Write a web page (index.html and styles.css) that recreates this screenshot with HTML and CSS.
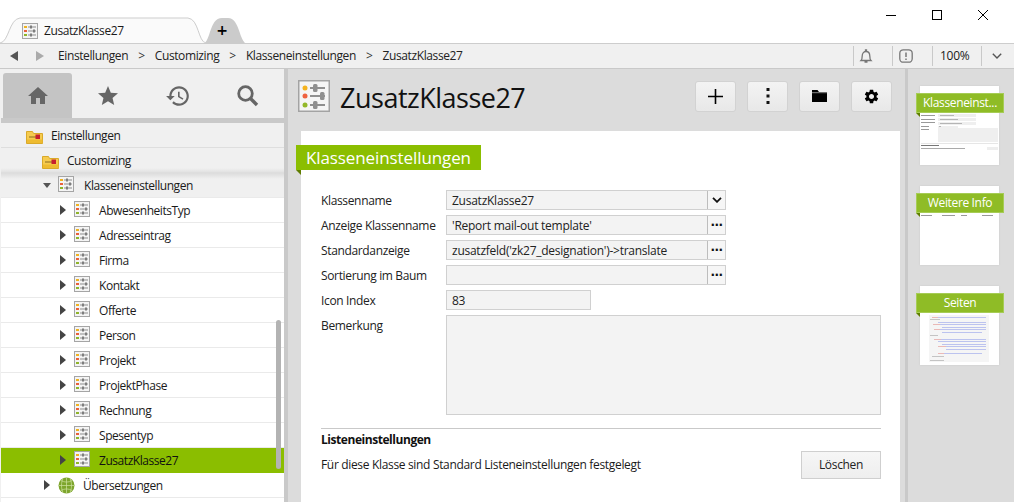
FILE: index.html
```html
<!DOCTYPE html>
<html lang="de">
<head>
<meta charset="utf-8">
<title>ZusatzKlasse27</title>
<link rel="stylesheet" href="styles.css">
</head>
<body>
<svg class="defs" width="0" height="0">
  <symbol id="cls" viewBox="0 0 32 32">
    <rect x=".75" y=".75" width="30.500" height="30.500" fill="#f5f5f5" stroke="#a3a3a3" stroke-width="1.500"/>
    <circle cx="7" cy="8" r="2.500" fill="#f5b31e"/>
    <circle cx="7" cy="16" r="2.500" fill="#ef6240"/>
    <circle cx="7" cy="25" r="2.500" fill="#93b82a"/>
    <path d="M12 8h15M12 16h15M12 25h15" stroke="#8f8f8f" stroke-width="2"/>
    <rect x="15" y="4" width="4.500" height="8" rx="1.500" fill="#8f8f8f"/>
    <rect x="22" y="12" width="4.500" height="8" rx="1.500" fill="#8f8f8f"/>
    <rect x="15" y="21" width="4.500" height="8" rx="1.500" fill="#8f8f8f"/>
  </symbol>
  <symbol id="cls-sm" viewBox="0 0 16 16">
    <rect x=".5" y=".5" width="15" height="15" fill="#f4f4f4" stroke="#a5a5a5"/>
    <rect x="2" y="3" width="3" height="2" fill="#efb21f"/>
    <rect x="2" y="7" width="3" height="2" fill="#e8603c"/>
    <rect x="2" y="11" width="3" height="2" fill="#8fb52a"/>
    <path d="M6 4h8M6 8h8M6 12h8" stroke="#8d8d8d"/>
    <rect x="8" y="2.500" width="2" height="3" fill="#7d7d7d"/>
    <rect x="11" y="6.500" width="2" height="3" fill="#7d7d7d"/>
    <rect x="8" y="10.500" width="2" height="3" fill="#7d7d7d"/>
  </symbol>
  <symbol id="folder" viewBox="0 0 17 14">
    <path d="M.5 13.500V1.500h6l1 2h9v10z" fill="#f6cb4e" stroke="#d9a92a"/>
    <path d="M1 9.500h15.500v3.500H1z" fill="#eebb30"/>
    <path d="M3 7h7" stroke="#8a6a20"/>
    <rect x="9.500" y="4.500" width="4.500" height="4.500" fill="#c71f2d"/>
  </symbol>
  <symbol id="arrow" viewBox="0 0 6 10"><path d="M0 0l6 5-6 5z" fill="#444"/></symbol>
</svg>

<header class="tabstrip">
  <div class="tab">
    <svg class="tab-shape" width="206" height="27" viewBox="0 0 206 27"><path d="M0 26c9-1 9-24 20-25h168c11 1 10 24 18 25" fill="#fafafa" stroke="#cdcdcd"/></svg>
    <svg class="ic16"><use href="#cls-sm"/></svg>
    <span class="tab-title">ZusatzKlasse27</span>
  </div>
  <div class="newtab">
    <svg class="newtab-shape" width="44" height="27" viewBox="0 0 44 27"><path d="M0 27c8-2 6-26 19-26h6c12 0 11 24 19 26z" fill="#cbcbcb"/></svg>
    <span class="newtab-plus">+</span>
  </div>
  <div class="winctl">
    <svg width="12" height="12" viewBox="0 0 12 12"><path d="M1 6.500h10" stroke="#000"/></svg>
    <svg width="12" height="12" viewBox="0 0 12 12"><rect x="1.500" y="1.500" width="9" height="9" fill="none" stroke="#000"/></svg>
    <svg width="12" height="12" viewBox="0 0 12 12"><path d="M1 1l10 10M11 1L1 11" stroke="#000"/></svg>
  </div>
</header>

<nav class="crumbbar">
  <svg class="nav-arrow" width="10" height="10" viewBox="0 0 10 10"><path d="M9 0L1 5l8 5z" fill="#555"/></svg>
  <svg class="nav-arrow nav-next" width="10" height="10" viewBox="0 0 10 10"><path d="M1 0l8 5-8 5z" fill="#aaa"/></svg>
  <span class="crumb">Einstellungen</span><span class="sep">&gt;</span>
  <span class="crumb">Customizing</span><span class="sep">&gt;</span>
  <span class="crumb">Klasseneinstellungen</span><span class="sep">&gt;</span>
  <span class="crumb">ZusatzKlasse27</span>
  <div class="crumb-tools">
    <span class="tool tool-bell"><svg width="14" height="15" viewBox="0 0 14 15"><path d="M2 11.500c1-1 1.200-2 1.200-4.500C3.200 4 5 2.500 7 2.500S10.800 4 10.800 7c0 2.500.2 3.500 1.200 4.500zM6.500 1h1v1.500h-1zM5.500 13h3" fill="none" stroke="#777" stroke-width="1.300"/></svg></span>
    <span class="tool tool-info"><svg width="14" height="14" viewBox="0 0 14 14"><rect x=".8" y=".8" width="12.400" height="12.400" rx="3.500" fill="none" stroke="#777" stroke-width="1.300"/><path d="M7 3.500v4.500M7 9.500v1.500" stroke="#666" stroke-width="1.300"/></svg></span>
    <span class="tool tool-zoom">100%</span>
    <span class="tool tool-down"><svg width="10" height="6" viewBox="0 0 10 6"><path d="M.8.8L5 5l4.200-4.200" fill="none" stroke="#555" stroke-width="1.400"/></svg></span>
  </div>
</nav>

<div class="workspace">
  <aside class="sidebar">
    <div class="side-tabs">
      <span class="side-tab is-active"><svg width="24" height="24" viewBox="0 0 24 24"><path d="M10 20v-6h4v6h5v-8h3L12 3 2 12h3v8z" fill="#666"/></svg></span>
      <span class="side-tab"><svg width="24" height="24" viewBox="0 0 24 24"><path d="M12 17.270L18.180 21l-1.640-7.030L22 9.240l-7.190-.61L12 2 9.190 8.630 2 9.240l5.460 4.730L5.820 21z" fill="#666"/></svg></span>
      <span class="side-tab"><svg width="26" height="26" viewBox="0 0 24 24"><path d="M13 3c-4.970 0-9 4.030-9 9H1l3.890 3.890.07.14L9 12H6c0-3.870 3.130-7 7-7s7 3.130 7 7-3.130 7-7 7c-1.930 0-3.680-.79-4.940-2.060l-1.420 1.420C8.270 19.990 10.510 21 13 21c4.970 0 9-4.030 9-9s-4.030-9-9-9zm-1 5v5l4.280 2.540.72-1.210-3.500-2.080V8H12z" fill="#666"/></svg></span>
      <span class="side-tab"><svg width="24" height="24" viewBox="0 0 24 24"><circle cx="9.500" cy="9.500" r="6.800" fill="none" stroke="#666" stroke-width="2.800"/><path d="M14.500 14.500l6.500 6.500" stroke="#666" stroke-width="3.400"/></svg></span>
    </div>
    <div class="tree">
      <div class="row row-top lvl0"><svg class="ic-folder"><use href="#folder"/></svg><span>Einstellungen</span></div>
      <div class="row row-top row-shade lvl1"><svg class="ic-folder"><use href="#folder"/></svg><span>Customizing</span></div>
      <div class="row row-open lvl2"><svg class="ic-down" width="8" height="5" viewBox="0 0 8 5"><path d="M0 0h8L4 5z" fill="#555"/></svg><svg class="ic16"><use href="#cls-sm"/></svg><span>Klasseneinstellungen</span></div>
      <div class="row lvl3"><svg class="ic-arrow"><use href="#arrow"/></svg><svg class="ic16"><use href="#cls-sm"/></svg><span>AbwesenheitsTyp</span></div>
      <div class="row lvl3"><svg class="ic-arrow"><use href="#arrow"/></svg><svg class="ic16"><use href="#cls-sm"/></svg><span>Adresseintrag</span></div>
      <div class="row lvl3"><svg class="ic-arrow"><use href="#arrow"/></svg><svg class="ic16"><use href="#cls-sm"/></svg><span>Firma</span></div>
      <div class="row lvl3"><svg class="ic-arrow"><use href="#arrow"/></svg><svg class="ic16"><use href="#cls-sm"/></svg><span>Kontakt</span></div>
      <div class="row lvl3"><svg class="ic-arrow"><use href="#arrow"/></svg><svg class="ic16"><use href="#cls-sm"/></svg><span>Offerte</span></div>
      <div class="row lvl3"><svg class="ic-arrow"><use href="#arrow"/></svg><svg class="ic16"><use href="#cls-sm"/></svg><span>Person</span></div>
      <div class="row lvl3"><svg class="ic-arrow"><use href="#arrow"/></svg><svg class="ic16"><use href="#cls-sm"/></svg><span>Projekt</span></div>
      <div class="row lvl3"><svg class="ic-arrow"><use href="#arrow"/></svg><svg class="ic16"><use href="#cls-sm"/></svg><span>ProjektPhase</span></div>
      <div class="row lvl3"><svg class="ic-arrow"><use href="#arrow"/></svg><svg class="ic16"><use href="#cls-sm"/></svg><span>Rechnung</span></div>
      <div class="row lvl3"><svg class="ic-arrow"><use href="#arrow"/></svg><svg class="ic16"><use href="#cls-sm"/></svg><span>Spesentyp</span></div>
      <div class="row lvl3 is-selected"><svg class="ic-arrow"><use href="#arrow"/></svg><svg class="ic16"><use href="#cls-sm"/></svg><span>ZusatzKlasse27</span></div>
      <div class="row lvl2"><svg class="ic-arrow"><use href="#arrow"/></svg><svg class="ic-globe" width="17" height="17" viewBox="0 0 17 17"><circle cx="8.500" cy="8.500" r="8" fill="#7da52c"/><path d="M1 8.500h15M8.500.5v16M3 3.500c3 2 8 2 11 0M3 13.500c3-2 8-2 11 0M5 1.500c-2 4-2 10 0 14M12 1.500c2 4 2 10 0 14" fill="none" stroke="#cfe3a0" stroke-width=".7"/></svg><span>Übersetzungen</span></div>
      <div class="scrollthumb"></div>
    </div>
  </aside>

  <main class="main">
    <div class="main-head">
      <svg class="ic-big"><use href="#cls"/></svg>
      <h1>ZusatzKlasse27</h1>
      <div class="actions">
        <button class="act" type="button"><svg width="15" height="15" viewBox="0 0 15 15"><path d="M7.500 0v15M0 7.500h15" stroke="#000" stroke-width="1.600"/></svg></button>
        <button class="act" type="button"><svg width="4" height="16" viewBox="0 0 4 16"><path d="M.5 0h3v3h-3zM.5 6.500h3v3h-3zM.5 13h3v3h-3z" fill="#111"/></svg></button>
        <button class="act" type="button"><svg width="15" height="12" viewBox="0 0 15 12"><path d="M0 0h5.500l1.500 2h8v10H0z" fill="#000"/><path d="M0 2.700h15" stroke="#ddd" stroke-width=".6"/></svg></button>
        <button class="act" type="button"><svg width="17" height="17" viewBox="0 0 24 24"><path d="M19.140 12.940c.04-.3.060-.61.060-.94 0-.32-.02-.64-.07-.94l2.030-1.580c.18-.14.230-.41.120-.61l-1.920-3.320c-.12-.22-.37-.29-.59-.22l-2.390.96c-.5-.38-1.030-.7-1.620-.94l-.36-2.540c-.04-.24-.24-.41-.48-.41h-3.840c-.24 0-.43.170-.47.410l-.36 2.540c-.59.240-1.130.570-1.620.940l-2.390-.96c-.22-.08-.47 0-.59.220L2.740 8.870c-.12.210-.08.470.120.610l2.030 1.580c-.05.3-.09.630-.09.940s.02.640.07.940l-2.030 1.580c-.18.140-.23.410-.12.610l1.920 3.320c.12.220.37.290.59.220l2.390-.96c.5.380 1.030.7 1.620.94l.36 2.540c.05.240.24.410.48.410h3.840c.24 0 .44-.17.47-.41l.36-2.540c.59-.24 1.130-.56 1.620-.94l2.390.96c.22.08.47 0 .59-.22l1.920-3.320c.12-.22.070-.47-.12-.61l-2.010-1.580zM12 15.600c-1.980 0-3.600-1.620-3.600-3.600s1.620-3.600 3.600-3.600 3.600 1.620 3.600 3.600-1.620 3.600-3.600 3.600z" fill="#000"/></svg></button>
      </div>
    </div>
    <section class="card">
      <div class="ribbon">Klasseneinstellungen</div>
      <div class="form">
        <div class="f-row"><label>Klassenname</label><div class="field w-std"><span class="val">ZusatzKlasse27</span><span class="f-btn"><svg width="10" height="6" viewBox="0 0 10 6"><path d="M1 .8l4 4 4-4" fill="none" stroke="#111" stroke-width="1.800"/></svg></span></div></div>
        <div class="f-row"><label>Anzeige Klassenname</label><div class="field w-std"><span class="val">'Report mail-out template'</span><span class="f-btn dots">···</span></div></div>
        <div class="f-row"><label>Standardanzeige</label><div class="field w-std"><span class="val">zusatzfeld('zk27_designation')-&gt;translate</span><span class="f-btn dots">···</span></div></div>
        <div class="f-row"><label>Sortierung im Baum</label><div class="field w-std"><span class="val"></span><span class="f-btn dots">···</span></div></div>
        <div class="f-row"><label>Icon Index</label><div class="field w-sm"><span class="val">83</span></div></div>
        <div class="f-row f-area"><label>Bemerkung</label><div class="field w-lg"></div></div>
      </div>
      <div class="list-settings">
        <h2>Listeneinstellungen</h2>
        <div class="list-row"><span>Für diese Klasse sind Standard Listeneinstellungen festgelegt</span><button class="del" type="button">Löschen</button></div>
      </div>
    </section>
  </main>

  <aside class="pages">
    <div class="page">
      <div class="tag">Klasseneinst...</div>
      <svg class="mini" width="79" height="37" viewBox="0 0 79 37"><g fill="#999"><rect x="1" y="1" width="14" height="1"/><rect x="1" y="5" width="14" height="1"/><rect x="1" y="8" width="14" height="1"/><rect x="1" y="12" width="8" height="1"/><rect x="1" y="15" width="8" height="1"/></g><g fill="#efefef"><rect x="18" y="0" width="38" height="3"/><rect x="18" y="4" width="38" height="3"/><rect x="18" y="8" width="38" height="3"/><rect x="18" y="12" width="20" height="2"/><rect x="18" y="14" width="60" height="14"/></g><g fill="#b5b5b5"><rect x="20" y="1" width="14" height="1"/><rect x="20" y="5" width="18" height="1"/><rect x="20" y="9" width="22" height="1"/><rect x="19" y="12" width="2" height="1"/></g><rect x="1" y="29" width="77" height=".5" fill="#ccc"/><rect x="1" y="31" width="18" height="1" fill="#777"/><rect x="1" y="34" width="44" height="1" fill="#aaa"/><rect x="67" y="33" width="11" height="3" fill="#eee"/></svg>
    </div>
    <div class="page">
      <div class="tag">Weitere Info</div>
      <svg class="mini" width="79" height="4" viewBox="0 0 79 4"><g fill="#999"><rect x="1" y="1" width="11" height="1"/><rect x="22" y="1" width="13" height="1"/><rect x="41" y="1" width="6" height="1"/><rect x="62" y="1" width="11" height="1"/></g></svg>
    </div>
    <div class="page">
      <div class="tag">Seiten</div>
      <svg class="mini" width="79" height="48" viewBox="0 0 79 48"><rect x="9" y="1" width="60" height="48" fill="#f5f5f5"/><g fill="#bcc3ef"><rect x="18" y="3" width="48" height="1"/><rect x="18" y="8" width="48" height="1"/><rect x="18" y="10" width="48" height="1"/><rect x="22" y="13" width="44" height="1"/><rect x="18" y="15" width="48" height="1"/><rect x="22" y="18" width="40" height="1"/><rect x="18" y="25" width="48" height="1"/><rect x="18" y="27" width="48" height="1"/><rect x="22" y="30" width="44" height="1"/><rect x="26" y="32" width="40" height="1"/><rect x="26" y="35" width="40" height="1"/><rect x="18" y="39" width="44" height="1"/></g><g fill="#eab9b7"><rect x="12" y="3" width="6" height="1"/><rect x="13" y="10" width="7" height="1"/><rect x="14" y="15" width="6" height="1"/><rect x="14" y="25" width="7" height="1"/><rect x="18" y="32" width="8" height="1"/><rect x="18" y="39" width="6" height="1"/></g><g fill="#c4c4c4"><rect x="10" y="5" width="10" height="1"/><rect x="10" y="21" width="8" height="1"/><rect x="12" y="42" width="12" height="1"/><rect x="10" y="46" width="14" height="1"/></g></svg>
    </div>
  </aside>
</div>
</body>
</html>
```

FILE: styles.css
```css
* { box-sizing: border-box; }
html, body { margin: 0; padding: 0; }
body {
  width: 1014px;
  height: 502px;
  overflow: hidden;
  display: flex;
  flex-direction: column;
  background: #fff;
  color: #1a1a1a;
  font: 12px/16px "Open Sans", "Noto Sans", "Liberation Sans", sans-serif;
  letter-spacing: -.25px;
}
.defs { position: absolute; }
.ic16 { width: 16px; height: 16px; flex: none; }

/* title strip */
.tabstrip {
  height: 44px;
  flex: none;
  display: flex;
  align-items: flex-end;
  border-bottom: 1px solid #cdcdcd;
  position: relative;
}
.tab {
  position: relative;
  width: 203px;
  height: 27px;
  margin-bottom: -1px;
  padding: 3px 0 0 22px;
  display: flex;
  align-items: center;
  gap: 6px;
  letter-spacing: -.42px;
}
.tab .ic16 { position: relative; margin-top: -3px; }
.tab-title { position: relative; margin-top: -3px; }
.tab-shape { position: absolute; left: 0; top: 0; }
.newtab { position: relative; width: 44px; height: 26px; padding-right: 6px; text-align: center; }
.newtab-shape { position: absolute; left: 0; top: 0; }
.newtab-plus { position: relative; font: bold 14px/27px "DejaVu Sans", sans-serif; color: #000; }
.winctl {
  margin-left: auto;
  align-self: flex-start;
  display: flex;
  gap: 34px;
  padding: 9px 25px 0 0;
}
.winctl svg { display: block; }

/* breadcrumb */
.crumbbar {
  height: 25px;
  flex: none;
  display: flex;
  align-items: center;
  background: #f0f0f0;
  border-bottom: 1px solid #c9c9c9;
  padding-left: 9px;
}
.nav-next { margin-left: 16px; margin-right: 13px; }
.sep { margin: 0 10px; color: #333; }
.crumb { color: #222; letter-spacing: -.39px; }
.crumb-tools { margin-left: auto; height: 100%; display: flex; align-items: center; }
.tool {
  height: 20px;
  display: flex;
  align-items: center;
  border-left: 1px solid #c9c9c9;
}
.tool-bell { width: 39px; padding-left: 5px; }
.tool-info { width: 40px; padding-left: 6px; }
.tool-zoom { width: 49px; padding-left: 7px; }
.tool-down { width: 33px; padding-left: 10px; }

/* body */
.workspace { flex: 1; display: flex; min-height: 0; }
.sidebar {
  width: 288px;
  flex: none;
  display: flex;
  flex-direction: column;
  border-right: 4px solid #c9c9c9;
  border-left: 1px solid #f0f0f0;
}
.side-tabs {
  height: 54px;
  flex: none;
  display: flex;
  align-items: flex-end;
  padding-left: 2px;
  background: #f0f0f0;
  border-bottom: 5px solid #c9c9c9;
}
.side-tab {
  width: 70px;
  height: 45px;
  display: flex;
  align-items: center;
  justify-content: center;
}
.side-tab.is-active { width: 69px; margin-right: 1px; background: #c4c4c4; border-radius: 3px 3px 0 0; }
.tree { flex: 1; position: relative; overflow: hidden; letter-spacing: -.45px; }
.row {
  height: 25px;
  display: flex;
  align-items: center;
  border-bottom: 1px solid #eaeaea;
  white-space: nowrap;
}
.row span { padding-top: 2px; }
.row-top { background: #f0f0f0; border-bottom-color: #dedede; }
.row-shade { background: linear-gradient(#f0f0f0 20px, #e2e2e2); }
.row-open { background: linear-gradient(#dcdcdc, #f0f0f0 6px); }
.ic-folder { width: 17px; height: 14px; flex: none; margin: 3px 8px 0 0; }
.lvl0 { padding-left: 25px; }
.lvl1 { padding-left: 41px; }
.lvl2 { padding-left: 43px; }
.row-open { padding-left: 42px; }
.lvl3 { padding-left: 59px; }
.ic-down { flex: none; margin-right: 7px; }
.ic-arrow { width: 6px; height: 10px; flex: none; margin-right: 8px; }
.row .ic16 { margin: 0 9px 2px 0; }
.row-open .ic16 { margin-right: 10px; }
.ic-globe { flex: none; margin-right: 8px; }
.is-selected { background: #8bbe00; border-bottom-color: #8bbe00; color: #111; }
.scrollthumb {
  position: absolute;
  right: 3px;
  top: 197px;
  width: 5px;
  height: 149px;
  border-radius: 3px;
  background: #b3b3b3;
}

/* main */
.main { flex: 1; min-width: 0; background: #dcdcdc; display: flex; flex-direction: column; }
.main-head {
  height: 62px;
  flex: none;
  display: flex;
  align-items: center;
  padding: 0 13px 8px 10px;
}
.ic-big { width: 32px; height: 32px; flex: none; margin-right: 10px; }
h1 { margin: 3px 0 0; font-size: 27px; font-weight: 400; line-height: 36px; color: #111; letter-spacing: -.5px; }
.actions { margin-left: auto; display: flex; gap: 11px; }
.act {
  width: 41px;
  height: 31px;
  padding: 0;
  display: flex;
  align-items: center;
  justify-content: center;
  background: linear-gradient(#f3f3f3, #e8e8e8);
  border: 1px solid #d2d2d2;
  border-radius: 3px;
}
.card {
  flex: 1;
  margin: 0 5px 0 13px;
  background: #fff;
  position: relative;
  padding: 59px 19px 0 20px;
}
.ribbon {
  position: absolute;
  left: -5px;
  top: 14px;
  height: 25px;
  width: 185px;
  padding-left: 10px;
  background: #8bbe00;
  color: #fff;
  font-size: 17px;
  line-height: 25px;
  letter-spacing: -.1px;
}
.ribbon::after {
  content: "";
  position: absolute;
  left: 0;
  top: 25px;
  border-top: 5px solid #5f7d00;
  border-left: 5px solid transparent;
}
.form { display: flex; flex-direction: column; gap: 5px; }
.f-row { display: flex; height: 20px; }
.f-row label { width: 125px; flex: none; line-height: 22px; color: #222; letter-spacing: -.35px; }
.f-area { height: 100px; }
.field {
  display: flex;
  align-items: center;
  background: #f3f3f3;
  border: 1px solid #d0d0d0;
  color: #222;
}
.w-std { width: 280px; }
.w-sm { width: 145px; }
.w-lg { width: 435px; }
.val { flex: 1; padding: 2px 0 0 5px; white-space: nowrap; overflow: hidden; }
.f-btn {
  width: 18px;
  height: 100%;
  display: flex;
  align-items: center;
  justify-content: center;
  border-left: 1px solid #bdbdbd;
  background: #f6f6f6;
}
.dots { font: bold 12px/16px "DejaVu Sans", sans-serif; letter-spacing: -.5px; color: #111; }
.list-settings { margin-top: 13px; border-top: 1px solid #c9c9c9; padding-top: 3px; letter-spacing: -.33px; }
h2 { margin: 0; font-size: 12px; font-weight: 700; line-height: 16px; color: #111; letter-spacing: -.45px; }
.list-row { display: flex; justify-content: space-between; align-items: center; height: 28px; margin-top: 3px; }
.del {
  width: 80px;
  height: 28px;
  padding: 0;
  background: linear-gradient(#f6f6f6, #eeeeee);
  border: 1px solid #cfcfcf;
  font: inherit;
  letter-spacing: inherit;
  color: #222;
}

/* page thumbnails */
.pages {
  width: 109px;
  flex: none;
  background: #dcdcdc;
  border-left: 3px solid #c9c9c9;
  padding: 17px 0 0 12px;
  display: flex;
  flex-direction: column;
  gap: 21px;
}
.page {
  width: 79px;
  height: 79px;
  background: #fff;
  position: relative;
  box-shadow: 0 0 2px rgba(0,0,0,.08);
  padding-top: 28px;
}
.mini { display: block; }
.tag {
  position: absolute;
  left: -4px;
  top: 7px;
  width: 88px;
  height: 20px;
  background: #8fbc26;
  border: 1px solid #a6cc55;
  color: #fff;
  text-align: center;
  line-height: 18px;
  font-size: 12px;
  letter-spacing: -.35px;
}
.tag::after {
  content: "";
  position: absolute;
  left: -1px;
  top: 19px;
  border-top: 4px solid #5f7d00;
  border-left: 4px solid transparent;
}
```
